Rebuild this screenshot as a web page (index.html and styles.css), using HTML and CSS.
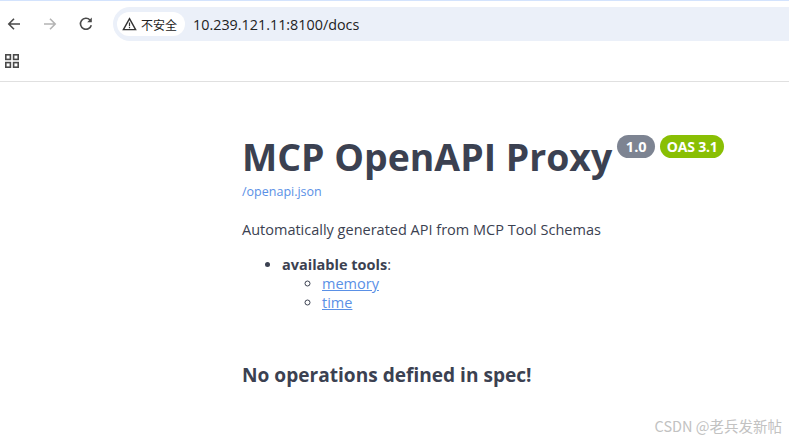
FILE: index.html
```html
<!DOCTYPE html>
<html lang="en">
<head>
    <meta charset="UTF-8">
    <title>MCP OpenAPI Proxy - Swagger UI</title>
    <link rel="stylesheet" href="styles.css">
</head>
<body>
    <div class="browser-bar">
        <div class="toolbar">
            <svg class="nav-icon" width="16" height="16" viewBox="0 0 16 16"><path d="M14 8H3M8 2.8L2.8 8 8 13.2" fill="none" stroke="#4a4a4a" stroke-width="1.6"/></svg>
            <svg class="nav-icon" width="16" height="16" viewBox="0 0 16 16"><path d="M2 8h11M8 2.8L13.2 8 8 13.2" fill="none" stroke="#b4b4b4" stroke-width="1.6"/></svg>
            <svg class="nav-icon" width="16" height="16" viewBox="0 0 16 16"><path d="M13.3 9.2A5.5 5.5 0 1 1 12 4" fill="none" stroke="#4a4a4a" stroke-width="1.6"/><path d="M13.8 1.6v4.6H9.2z" fill="#4a4a4a"/></svg>
            <div class="address">
                <span class="not-secure">
                    <svg width="15" height="14" viewBox="0 0 15 14"><path d="M7.5 1.6L13.6 12.6H1.4z" fill="none" stroke="#333" stroke-width="1.4"/><path d="M7.5 5.4v3.8M7.5 10v1.3" stroke="#333" stroke-width="1.2"/></svg>
                    不安全
                </span>
                <span class="url">10.239.121.11:8100/docs</span>
            </div>
        </div>
        <div class="bookmarks">
            <svg width="14" height="14" viewBox="0 0 14 14"><g fill="none" stroke="#4a4a4a" stroke-width="1.6"><rect x="0.8" y="0.8" width="4.6" height="4.6"/><rect x="8.6" y="0.8" width="4.6" height="4.6"/><rect x="0.8" y="8.6" width="4.6" height="4.6"/><rect x="8.6" y="8.6" width="4.6" height="4.6"/></g></svg>
        </div>
    </div>

    <div class="docs">
        <div class="title-row">
            <h1>MCP OpenAPI Proxy</h1>
            <span class="badge badge-version">1.0</span>
            <span class="badge badge-oas">OAS 3.1</span>
        </div>
        <a class="spec-link" href="#">/openapi.json</a>
        <p class="description">Automatically generated API from MCP Tool Schemas</p>
        <ul class="tools">
            <li><strong>available tools</strong>:
                <ul>
                    <li><a href="#">memory</a></li>
                    <li><a href="#">time</a></li>
                </ul>
            </li>
        </ul>
        <h3>No operations defined in spec!</h3>
    </div>

    <div class="watermark">CSDN @老兵发新帖</div>
</body>
</html>
```

FILE: styles.css
```css
html, body {
    height: 100%;
}

body {
    margin: 0;
    background: #fff;
    color: #3b4151;
    font-family: 'Open Sans', 'Noto Sans CJK SC', sans-serif;
    overflow: hidden;
}

.browser-bar {
    height: 80px;
    border-top: 1px solid #d3e3fd;
    border-bottom: 1px solid #e0e0e0;
}

.toolbar {
    display: flex;
    align-items: center;
    height: 46px;
    padding-left: 6px;
}

.nav-icon {
    margin-right: 20px;
}

.nav-icon:nth-child(3) {
    margin-right: 19px;
}

.address {
    flex: 1;
    display: flex;
    align-items: center;
    height: 34px;
    padding-left: 4px;
    background: #ebf0f9;
    border-radius: 17px 0 0 17px;
}

.not-secure {
    display: flex;
    align-items: center;
    gap: 4px;
    height: 24px;
    padding: 0 8px 0 5px;
    background: #fff;
    border-radius: 12px;
    color: #222;
    font-size: 12px;
    font-family: 'Noto Sans CJK SC', sans-serif;
}

.url {
    margin-left: 8px;
    color: #222;
    font-size: 14.35px;
}

.bookmarks {
    display: flex;
    align-items: center;
    height: 28px;
    padding-left: 5px;
}

.docs {
    width: 530px;
    margin-left: 242px;
    padding-top: 51px;
}

.title-row {
    display: flex;
    align-items: flex-start;
}

h1 {
    margin: 0;
    font-size: 37.4px;
    line-height: 48px;
    font-weight: 700;
    white-space: nowrap;
}

.badge {
    margin-top: 2px;
    height: 23px;
    line-height: 23px;
    border-radius: 12px;
    color: #fff;
    font-size: 14.5px;
    font-weight: 700;
    text-align: center;
}

.badge-version {
    width: 38px;
    margin-left: 5px;
    background: #7d8492;
}

.badge-oas {
    width: 64px;
    margin-left: 5px;
    background: #89bf04;
    font-size: 14px;
    letter-spacing: -0.2px;
}

a {
    color: #5a90e6;
}

.spec-link {
    display: block;
    margin-top: 3px;
    font-size: 12.5px;
    line-height: 16px;
    text-decoration: none;
}

.description {
    margin: 20px 0 0;
    font-size: 14.5px;
    line-height: 19px;
}

.tools {
    margin: 16px 0 0;
    padding-left: 40px;
    font-size: 14.5px;
    line-height: 19px;
}

.tools ul {
    margin: 0;
    padding-left: 40px;
}

h3 {
    margin: 49px 0 0;
    font-size: 19.1px;
    line-height: 28px;
    font-weight: 700;
}

.watermark {
    position: absolute;
    right: 7px;
    bottom: 3px;
    color: #c2c2c2;
    font-size: 14.5px;
    font-family: 'Noto Sans CJK SC', sans-serif;
}
```
